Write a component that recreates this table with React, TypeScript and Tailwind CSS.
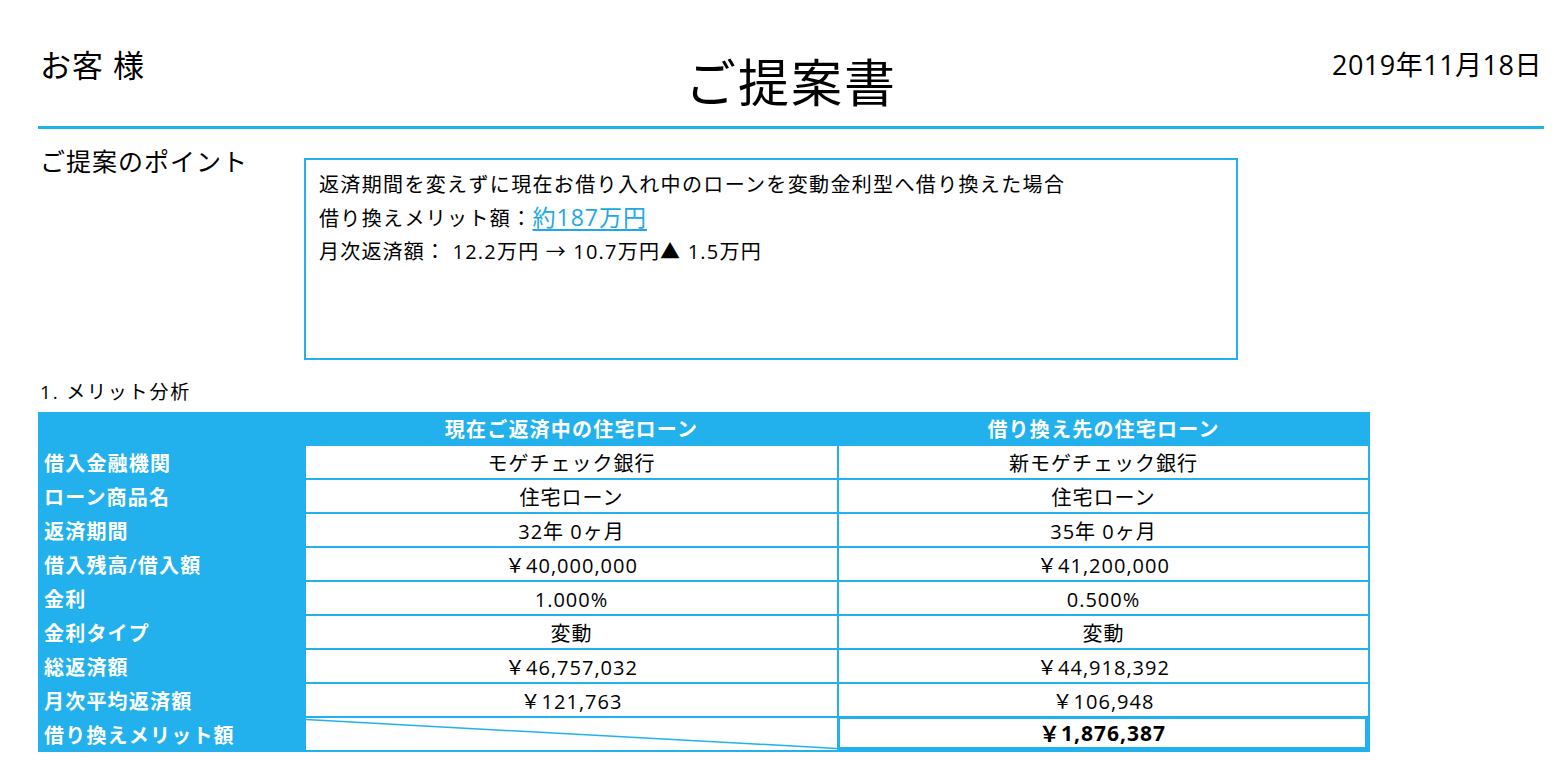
import React from "react";

const FONT = { fontFamily: '"Open Sans", "Noto Sans CJK JP", sans-serif' };

const rows: [string, string, string][] = [
  ["借入金融機関", "モゲチェック銀行", "新モゲチェック銀行"],
  ["ローン商品名", "住宅ローン", "住宅ローン"],
  ["返済期間", "32年 0ヶ月", "35年 0ヶ月"],
  ["借入残高/借入額", "￥40,000,000", "￥41,200,000"],
  ["金利", "1.000%", "0.500%"],
  ["金利タイプ", "変動", "変動"],
  ["総返済額", "￥46,757,032", "￥44,918,392"],
  ["月次平均返済額", "￥121,763", "￥106,948"],
];

export default function App() {
  return (
    <div className="bg-white w-[1554px] h-[768px] overflow-hidden text-black" style={FONT}>
      <div className="pl-[38px] pr-[10px]">
        {/* header */}
        <div className="grid grid-cols-[1fr_auto_1fr] h-[126px]">
          <div className="pt-[47px] pl-[2px] text-[31px] leading-[36px] tracking-[1px]">お客 様</div>
          <div className="pt-[54px] text-[51px] leading-[56px] tracking-[2px]">ご提案書</div>
          <div className="pt-[47px] text-right text-[27px] leading-[36px] tracking-[0.5px] pr-[2px]">2019年11月18日</div>
        </div>
        <div className="h-[3px] bg-[#22b1ec]" />

        {/* proposal point */}
        <div className="grid grid-cols-[266px_934px] pt-[29px]">
          <div className="pl-[2px] -mt-[12px] text-[25px] leading-[30px] tracking-[1px]">ご提案のポイント</div>
          <div className="h-[202px] border-2 border-[#22b1ec] pl-[13px] pt-[8px] text-[20px] leading-[33px] tracking-[1.35px]">
            <div>返済期間を変えずに現在お借り入れ中のローンを変動金利型へ借り換えた場合</div>
            <div>
              借り換えメリット額：
              <span className="text-[23px] text-[#22a8e6] underline underline-offset-[3px] tracking-[1px]">約187万円</span>
            </div>
            <div className="tracking-[1.2px]">月次返済額： 12.2万円 → 10.7万円▲ 1.5万円</div>
          </div>
        </div>

        {/* merit analysis */}
        <div className="pt-[17px] pl-[2px] text-[19px] leading-[30px] tracking-[1.8px]">1. メリット分析</div>
        <div className="mt-[5px] w-[1332px] bg-[#22b1ec] pr-[2px] pb-[2px] grid grid-cols-[266px_531px_529px] gap-[2px] text-[20px] tracking-[1.2px]">
          <div className="h-[32px]" />
          <div className="h-[32px] pt-[3px] flex items-center justify-center text-white font-semibold">現在ご返済中の住宅ローン</div>
          <div className="h-[32px] pt-[3px] flex items-center justify-center text-white font-semibold">借り換え先の住宅ローン</div>
          {rows.map(([label, a, b]) => (
            <React.Fragment key={label}>
              <div className="h-[32px] pt-[3px] flex items-center pl-[6px] text-white font-semibold">{label}</div>
              <div className="h-[32px] pt-[3px] bg-white flex items-center justify-center tracking-[1px]">{a}</div>
              <div className="h-[32px] pt-[3px] bg-white flex items-center justify-center tracking-[1px]">{b}</div>
            </React.Fragment>
          ))}
          <div className="h-[32px] pt-[3px] flex items-center pl-[6px] text-white font-semibold">借り換えメリット額</div>
          <div className="h-[32px] bg-white relative">
            <svg className="absolute inset-0 w-full h-full" viewBox="0 0 100 100" preserveAspectRatio="none">
              <line x1="0" y1="5" x2="100" y2="95" stroke="#22b1ec" strokeWidth="1.5" vectorEffect="non-scaling-stroke" />
            </svg>
          </div>
          <div className="bg-white border-[3px] border-[#22b1ec] -ml-[2px] -mt-[2px] h-[34px] pt-[2px] flex items-center justify-center text-[21px] font-bold tracking-[1px]">￥1,876,387</div>
        </div>
      </div>
    </div>
  );
}
